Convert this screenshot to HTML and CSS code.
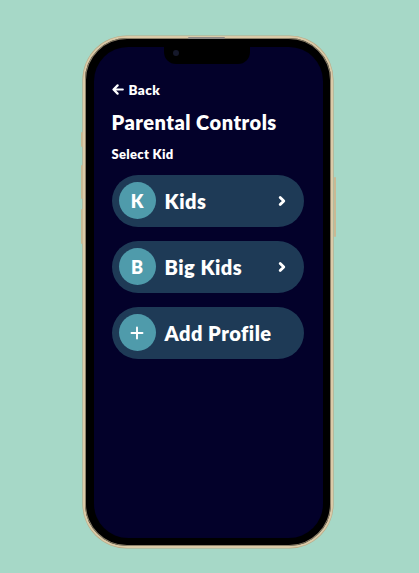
FILE: index.html
```html
<!DOCTYPE html>
<html lang="en">
<head>
<meta charset="utf-8">
<title>Parental Controls</title>
<link rel="stylesheet" href="styles.css">
</head>
<body>
<div class="stage">
  <div class="phone">
    <span class="btn btn-mute"></span>
    <span class="btn btn-volup"></span>
    <span class="btn btn-voldown"></span>
    <span class="btn btn-power"></span>
    <span class="speaker"></span>
    <div class="screen">
      <div class="notch"><span class="camera"></span></div>
      <div class="content">
        <a class="back" href="#">
          <svg class="back-icon" viewBox="0 0 12 11" width="12" height="11" aria-hidden="true">
            <path d="M10.8 5.5H1.8M5.6 1.4L1.5 5.5l4.1 4.1" fill="none" stroke="#fff" stroke-width="2.2" stroke-linecap="round" stroke-linejoin="round"/>
          </svg>
          <span>Back</span>
        </a>
        <h1 class="title">Parental Controls</h1>
        <h2 class="subtitle">Select Kid</h2>
        <ul class="profiles">
          <li class="profile">
            <span class="avatar">K</span>
            <span class="name">Kids</span>
            <svg class="chev" viewBox="0 0 8 12" width="8" height="12" aria-hidden="true">
              <path d="M2.2 2.4l3.6 3.6-3.6 3.6" fill="none" stroke="#fff" stroke-width="2.8" stroke-linecap="round" stroke-linejoin="round"/>
            </svg>
          </li>
          <li class="profile">
            <span class="avatar">B</span>
            <span class="name">Big Kids</span>
            <svg class="chev" viewBox="0 0 8 12" width="8" height="12" aria-hidden="true">
              <path d="M2.2 2.4l3.6 3.6-3.6 3.6" fill="none" stroke="#fff" stroke-width="2.8" stroke-linecap="round" stroke-linejoin="round"/>
            </svg>
          </li>
          <li class="profile">
            <span class="avatar">
              <svg viewBox="0 0 14 14" width="14" height="14" aria-hidden="true">
                <path d="M7 1.5v11M1.5 7h11" fill="none" stroke="#fff" stroke-width="1.9" stroke-linecap="round"/>
              </svg>
            </span>
            <span class="name">Add Profile</span>
          </li>
        </ul>
      </div>
    </div>
  </div>
</div>
</body>
</html>
```
FILE: styles.css
```css
* { box-sizing: border-box; }

html, body {
  margin: 0;
  padding: 0;
}

body {
  background: #a6d8c7;
  font-family: "Lato", "Noto Sans", sans-serif;
  width: 419px;
  height: 573px;
  overflow: hidden;
}

.stage {
  display: flex;
  justify-content: center;
  padding-top: 36px;
  padding-right: 3px;
}

.phone {
  position: relative;
  width: 250px;
  height: 512px;
  border: 2.5px solid #dacaa8;
  border-radius: 44px;
  background: #000;
  padding: 8.5px;
  box-shadow: 0 0 0 0.6px #b9a985, inset 0 0 0 1px #8c816a;
}

.btn {
  position: absolute;
  width: 2px;
  background: #c9b994;
  border-radius: 1px;
}
.btn-mute { left: -4.5px; top: 94px; height: 15px; }
.btn-volup { left: -4.5px; top: 127px; height: 34px; }
.btn-voldown { left: -4.5px; top: 171px; height: 35px; }
.btn-power { right: -4.5px; top: 139px; height: 60px; }

.speaker {
  position: absolute;
  top: -1px;
  left: 103px;
  width: 37px;
  height: 2px;
  background: #8d8a86;
  border-radius: 1px;
  z-index: 2;
}

.screen {
  position: relative;
  width: 100%;
  height: 100%;
  background: #03012a;
  border-radius: 34px;
  overflow: hidden;
}

.notch {
  position: absolute;
  top: 0;
  left: 70px;
  width: 86px;
  height: 17px;
  background: #000;
  border-radius: 0 0 12px 12px;
}

.camera {
  position: absolute;
  left: 9px;
  top: 3px;
  width: 6px;
  height: 6px;
  border-radius: 50%;
  background: #15182a;
}

.content {
  padding: 35px 19px 0 18px;
  color: #fff;
}

.back {
  display: flex;
  align-items: center;
  gap: 5px;
  color: #fff;
  text-decoration: none;
  font-weight: 800;
  font-size: 13.5px;
  line-height: 16px;
  letter-spacing: 0.4px;
}

.title {
  margin: 12px 0 0;
  font-size: 20px;
  line-height: 24px;
  font-weight: 800;
  letter-spacing: 0.5px;
}

.subtitle {
  margin: 12px 0 0;
  font-size: 13px;
  line-height: 16px;
  font-weight: 800;
  letter-spacing: 0.3px;
}

.profiles {
  list-style: none;
  margin: 13px 0 0;
  padding: 0;
  display: flex;
  flex-direction: column;
  gap: 14px;
}

.profile {
  display: flex;
  align-items: center;
  height: 52px;
  padding: 0 18px 0 7px;
  border-radius: 26px;
  background: #1e3a56;
}

.avatar {
  display: flex;
  align-items: center;
  justify-content: center;
  width: 37px;
  height: 37px;
  border-radius: 50%;
  background: #4f9bab;
  font-size: 18px;
  font-weight: 800;
  flex: none;
}

.name {
  margin-left: 9px;
  font-size: 20px;
  font-weight: 800;
  letter-spacing: 0.5px;
  flex: 1;
}

.chev { flex: none; }
```
